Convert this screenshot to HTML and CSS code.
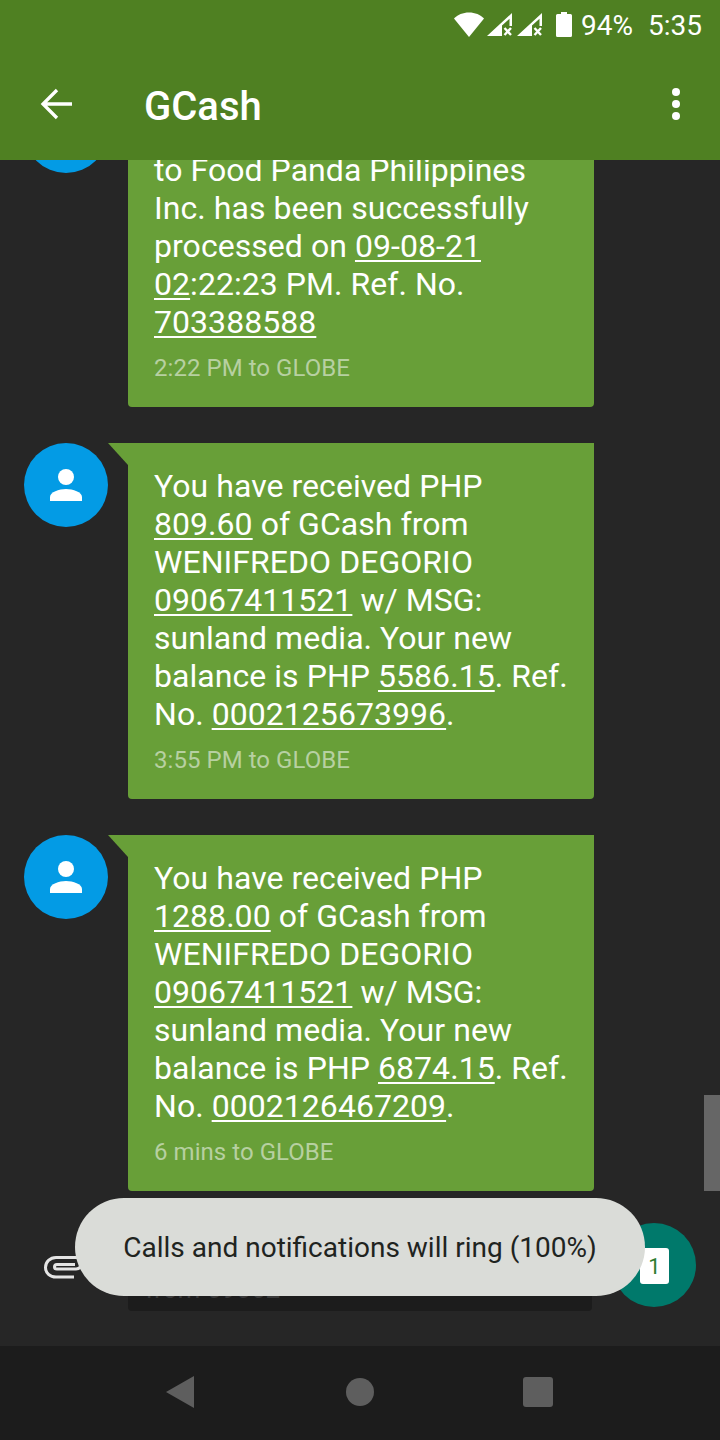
FILE: index.html
```html
<!DOCTYPE html>
<html lang="en">
  <head>
    <meta charset="UTF-8" />
    <meta name="viewport" content="width=device-width, initial-scale=1.0" />
    <title>GCash</title>
    <link rel="stylesheet" href="styles.css">
  </head>
  <body>
    <main class="phone">
      <div class="status-bar">
        <svg class="status-icon wifi" width="30" height="25" viewBox="0 0 30 25"><path d="M0 6.500C3.500 2.800 9 .5 15 .5s11.500 2.300 15 6L15 25z" fill="#fff"/></svg>
        <svg class="status-icon" width="25" height="23" viewBox="0 0 25 23"><path d="M0 23 25 0v13h-2.500V5.700L15 12.600V23z" fill="#fff"/><path d="m17.500 15 6.500 7M24 15l-6.500 7" stroke="#fff" stroke-width="2.400"/></svg>
        <svg class="status-icon" width="25" height="23" viewBox="0 0 25 23"><path d="M0 23 25 0v13h-2.500V5.700L15 12.600V23z" fill="#fff"/><path d="m17.500 15 6.500 7M24 15l-6.500 7" stroke="#fff" stroke-width="2.400"/></svg>
        <svg class="status-icon battery" width="16" height="25" viewBox="0 0 16 25"><path d="M5 0h6v2h3.500q1.500 0 1.500 1.500v20q0 1.500-1.500 1.500h-13Q0 25 0 23.500v-20Q0 2 1.500 2H5z" fill="#fff"/></svg>
        <span class="status-text">94%</span>
        <span class="status-text status-clock">5:35</span>
      </div>

      <header class="app-bar">
        <svg class="back" width="32" height="32" viewBox="0 0 32 32"><path d="M32 16H3M17 2 3 16l14 14" fill="none" stroke="#fff" stroke-width="3.300"/></svg>
        <h1>GCash</h1>
        <div class="menu"><span></span><span></span><span></span></div>
      </header>

      <section class="thread">
        <div class="message">
          <div class="avatar"><svg width="34" height="32" viewBox="0 0 34 32"><circle cx="17" cy="8" r="8" fill="#fff"/><path d="M1 32v-4c0-5 9-8 16-8s16 3 16 8v4z" fill="#fff"/></svg></div>
          <div class="bubble">
            <p>Your payment of PHP 150.00<br>to Food Panda Philippines<br>Inc. has been successfully<br>processed on <u>09-08-21</u><br><u>02</u>:22:23 PM. Ref. No.<br><u>703388588</u></p>
            <div class="meta">2:22 PM to GLOBE</div>
          </div>
        </div>

        <div class="message">
          <div class="avatar"><svg width="34" height="32" viewBox="0 0 34 32"><circle cx="17" cy="8" r="8" fill="#fff"/><path d="M1 32v-4c0-5 9-8 16-8s16 3 16 8v4z" fill="#fff"/></svg></div>
          <div class="bubble">
            <p>You have received PHP<br><u>809.60</u> of GCash from<br>WENIFREDO DEGORIO<br><u>09067411521</u> w/ MSG:<br>sunland media. Your new<br>balance is PHP <u>5586.15</u>. Ref.<br>No. <u>0002125673996</u>.</p>
            <div class="meta">3:55 PM to GLOBE</div>
          </div>
        </div>

        <div class="message">
          <div class="avatar"><svg width="34" height="32" viewBox="0 0 34 32"><circle cx="17" cy="8" r="8" fill="#fff"/><path d="M1 32v-4c0-5 9-8 16-8s16 3 16 8v4z" fill="#fff"/></svg></div>
          <div class="bubble">
            <p>You have received PHP<br><u>1288.00</u> of GCash from<br>WENIFREDO DEGORIO<br><u>09067411521</u> w/ MSG:<br>sunland media. Your new<br>balance is PHP <u>6874.15</u>. Ref.<br>No. <u>0002126467209</u>.</p>
            <div class="meta">6 mins to GLOBE</div>
          </div>
        </div>

        <div class="message message--draft">
          <div class="bubble bubble--draft">
            <p>from 09062</p>
          </div>
        </div>
      </section>

      <div class="scrollbar"></div>

      <svg class="clip" width="40" height="24" viewBox="0 0 40 24"><path d="M30 21H12C6 21 1.500 17 1.500 11.500S6 1.500 12 1.500h20c3.500 0 6 2.500 6 5.500s-2.500 6-6 6H13c-1.500 0-2.500-.5-2.500-2s1-2.500 2.500-2.500h18" fill="none" stroke="#e4e4e4" stroke-width="3"/></svg>

      <div class="fab"><span class="fab__sim">1</span></div>

      <div class="toast">Calls and notifications will ring (100%)</div>

      <nav class="nav-bar">
        <span class="nav-back"></span>
        <span class="nav-home"></span>
        <span class="nav-recent"></span>
      </nav>
    </main>
  </body>
</html>
```

FILE: styles.css
```css
* {
  box-sizing: border-box;
}

body {
  margin: 0;
  background-color: #262626;
  font-family: Roboto, "Liberation Sans", sans-serif;
}

.phone {
  position: relative;
  width: 720px;
  height: 1440px;
  display: flex;
  flex-direction: column;
  overflow: hidden;
}

/* Status bar */
.status-bar {
  height: 48px;
  flex-shrink: 0;
  display: flex;
  align-items: center;
  padding-right: 18px;
  background-color: #4f8022;
  color: #fff;
  position: relative;
  z-index: 2;
}

.status-icon {
  flex-shrink: 0;
  margin-right: 5px;
}

.wifi {
  margin-left: auto;
  margin-right: 3px;
}

.battery {
  margin: 0 9px 0 9px;
}

.status-text {
  font-size: 28px;
  line-height: 48px;
  padding-top: 4px;
}

.status-clock {
  margin-left: 15px;
}

/* App bar */
.app-bar {
  height: 112px;
  flex-shrink: 0;
  display: flex;
  align-items: center;
  padding: 0 40px;
  background-color: #4f8022;
  color: #fff;
  position: relative;
  z-index: 2;
}

.back {
  margin-right: 72px;
}

.app-bar h1 {
  flex: 1;
  margin: 4px 0 0;
  font-size: 40px;
  font-weight: 500;
}

.menu {
  display: flex;
  flex-direction: column;
  gap: 4px;
}

.menu span {
  width: 8px;
  height: 8px;
  border-radius: 50%;
  background-color: #fff;
}

/* Conversation */
.thread {
  flex: 1;
  min-height: 0;
  display: flex;
  flex-direction: column;
  justify-content: flex-end;
  gap: 36px;
  padding: 0 126px 35px 24px;
  overflow: hidden;
}

.message {
  display: flex;
  flex-shrink: 0;
  align-items: flex-start;
  gap: 20px;
}

.message--draft {
  padding: 0 2px 0 104px;
}

.avatar {
  width: 84px;
  height: 84px;
  flex-shrink: 0;
  display: flex;
  align-items: center;
  justify-content: center;
  border-radius: 50%;
  background-color: #039be5;
}

.bubble {
  position: relative;
  flex: 1;
  padding: 24px 20px 25px 26px;
  border-radius: 0 0 4px 4px;
  background-color: #689f38;
  color: #fff;
}

/* Little tail next to the avatar */
.bubble::before {
  content: "";
  position: absolute;
  top: 0;
  left: -20px;
  width: 20px;
  height: 22px;
  background-color: #689f38;
  clip-path: polygon(0 0, 100% 0, 100% 100%);
}

.bubble--draft {
  height: 84px;
  padding: 0 0 0 17px;
  background-color: #1c1c1c;
  color: #3a3a3a;
}

.bubble--draft::before {
  display: none;
}

.bubble p {
  margin: 0;
  font-size: 32px;
  line-height: 38px;
  letter-spacing: 0.05px;
  white-space: nowrap;
}

.bubble u {
  text-underline-offset: 3px;
  text-decoration-thickness: 2px;
}

.bubble--draft p {
  padding-top: 43px;
  font-size: 26px;
}

.meta {
  margin-top: 13px;
  font-size: 24px;
  line-height: 28px;
  letter-spacing: 0.05px;
  color: #b7d0a1;
}

/* Overlays */
.scrollbar {
  position: absolute;
  top: 1095px;
  right: 0;
  width: 16px;
  height: 96px;
  background-color: #666;
}

.clip {
  position: absolute;
  top: 1256px;
  left: 44px;
}

.fab {
  position: absolute;
  top: 1223px;
  left: 612px;
  width: 84px;
  height: 84px;
  display: flex;
  align-items: center;
  justify-content: center;
  border-radius: 50%;
  background-color: #00796b;
}

.fab__sim {
  width: 29px;
  height: 36px;
  margin: 2px 0 0 1px;
  display: flex;
  align-items: center;
  justify-content: center;
  border-radius: 3px;
  background-color: #fff;
  color: #2e7d32;
  font-size: 22px;
}

.toast {
  position: absolute;
  top: 1198px;
  left: 75px;
  width: 570px;
  height: 98px;
  padding-top: 1px;
  display: flex;
  align-items: center;
  justify-content: center;
  border-radius: 49px;
  background-color: #dadcd8;
  color: #1f241f;
  font-size: 28px;
}

/* Navigation bar */
.nav-bar {
  height: 94px;
  flex-shrink: 0;
  display: flex;
  align-items: center;
  justify-content: center;
  padding: 0 1px 2px 0;
  background-color: #1c1c1c;
}

.nav-back {
  width: 28px;
  height: 32px;
  margin-right: 152px;
  background-color: #5e5e5e;
  clip-path: polygon(0 50%, 100% 0, 100% 100%);
}

.nav-home {
  width: 28px;
  height: 28px;
  margin-right: 149px;
  border-radius: 50%;
  background-color: #5e5e5e;
}

.nav-recent {
  width: 30px;
  height: 30px;
  border-radius: 3px;
  background-color: #5e5e5e;
}
```
